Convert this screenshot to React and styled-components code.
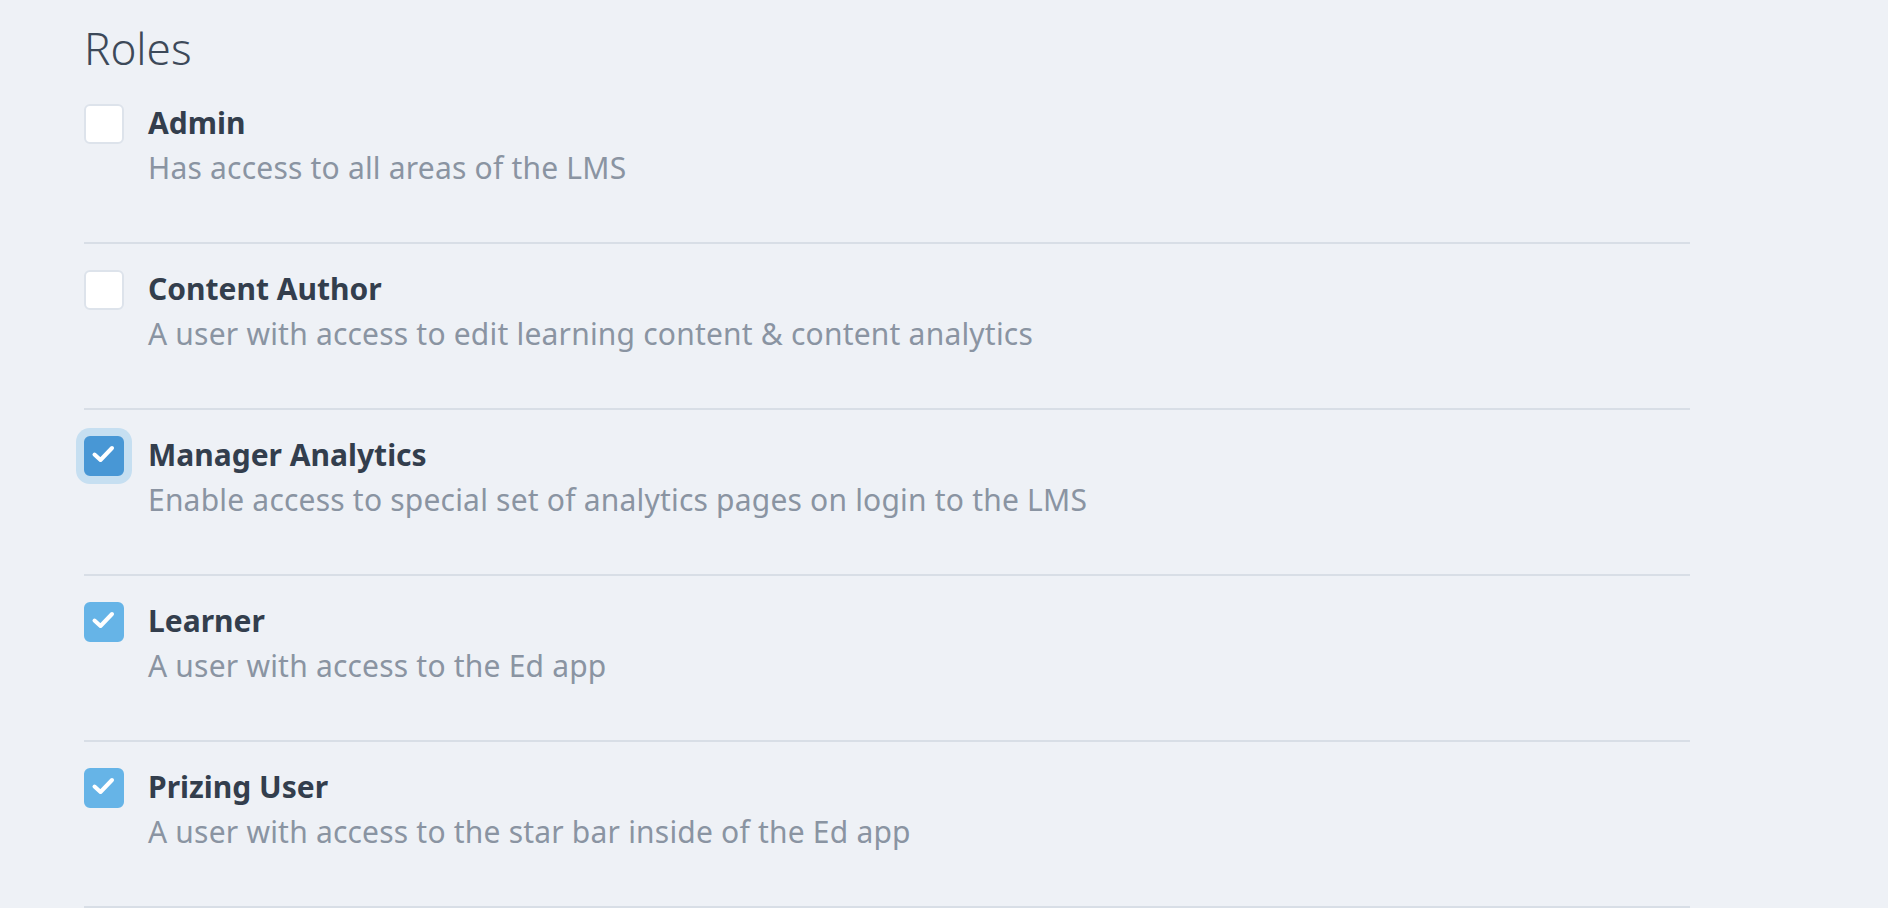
import React from "react";
import styled, { createGlobalStyle, css } from "styled-components";

const GlobalStyle = createGlobalStyle`
  html, body {
    margin: 0;
    padding: 0;
    background: #eef1f6;
  }
  body {
    font-family: "Noto Sans", "Open Sans", Arial, sans-serif;
    -webkit-font-smoothing: antialiased;
  }
`;

const Page = styled.main`
  min-height: 908px;
  box-sizing: border-box;
  padding: 23px 0 0 84px;
  background: #eef1f6;
`;

const Section = styled.section`
  width: 1606px;
`;

const Heading = styled.h2`
  margin: 0 0 5px;
  font-family: "Noto Sans", sans-serif;
  font-weight: 300;
  font-size: 44px;
  line-height: 50px;
  color: #3d4959;
`;

const List = styled.ul`
  list-style: none;
  margin: 0;
  padding: 0;
`;

const Row = styled.li`
  display: grid;
  grid-template-columns: 40px 1fr;
  column-gap: 24px;
  align-items: start;
  padding: 26px 0 56px;
  border-bottom: 2px solid #d8dee6;
  cursor: pointer;
`;

const Box = styled.span`
  box-sizing: border-box;
  width: 40px;
  height: 40px;
  border-radius: 6px;
  display: flex;
  align-items: center;
  justify-content: center;
  background: #ffffff;
  border: 2px solid #dde3eb;

  ${(p) =>
    p.$checked &&
    css`
      background: #66b4e7;
      border-color: #66b4e7;
    `}

  ${(p) =>
    p.$focused &&
    css`
      background: #4897d5;
      border-color: #4897d5;
      box-shadow: 0 0 0 8px #c6dff1;
    `}
`;

const Text = styled.div`
  display: flex;
  flex-direction: column;
`;

const Title = styled.span`
  font-weight: 700;
  font-size: 30px;
  line-height: 38px;
  color: #333e4d;
`;

const Desc = styled.span`
  margin-top: 8px;
  font-weight: 400;
  font-size: 30px;
  line-height: 36px;
  letter-spacing: 0.2px;
  color: #8a94a2;
`;

const Check = () => (
  <svg width="40" height="40" viewBox="0 0 40 40" aria-hidden="true" style={{ flex: "none" }}>
    <path
      d="M10.5 18.5 L16.5 24 L28 12"
      fill="none"
      stroke="#ffffff"
      strokeWidth="4"
      strokeLinecap="round"
      strokeLinejoin="round"
    />
  </svg>
);

const roles = [
  { title: "Admin", desc: "Has access to all areas of the LMS", checked: false },
  {
    title: "Content Author",
    desc: "A user with access to edit learning content & content analytics",
    checked: false,
  },
  {
    title: "Manager Analytics",
    desc: "Enable access to special set of analytics pages on login to the LMS",
    checked: true,
    focused: true,
  },
  { title: "Learner", desc: "A user with access to the Ed app", checked: true },
  {
    title: "Prizing User",
    desc: "A user with access to the star bar inside of the Ed app",
    checked: true,
  },
];

export default function App() {
  return (
    <>
      <GlobalStyle />
      <Page>
        <Section>
          <Heading>Roles</Heading>
          <List>
            {roles.map((r) => (
              <Row key={r.title} role="checkbox" aria-checked={r.checked}>
                <Box $checked={r.checked} $focused={r.focused}>
                  {r.checked && <Check />}
                </Box>
                <Text>
                  <Title>{r.title}</Title>
                  <Desc>{r.desc}</Desc>
                </Text>
              </Row>
            ))}
          </List>
        </Section>
      </Page>
    </>
  );
}
